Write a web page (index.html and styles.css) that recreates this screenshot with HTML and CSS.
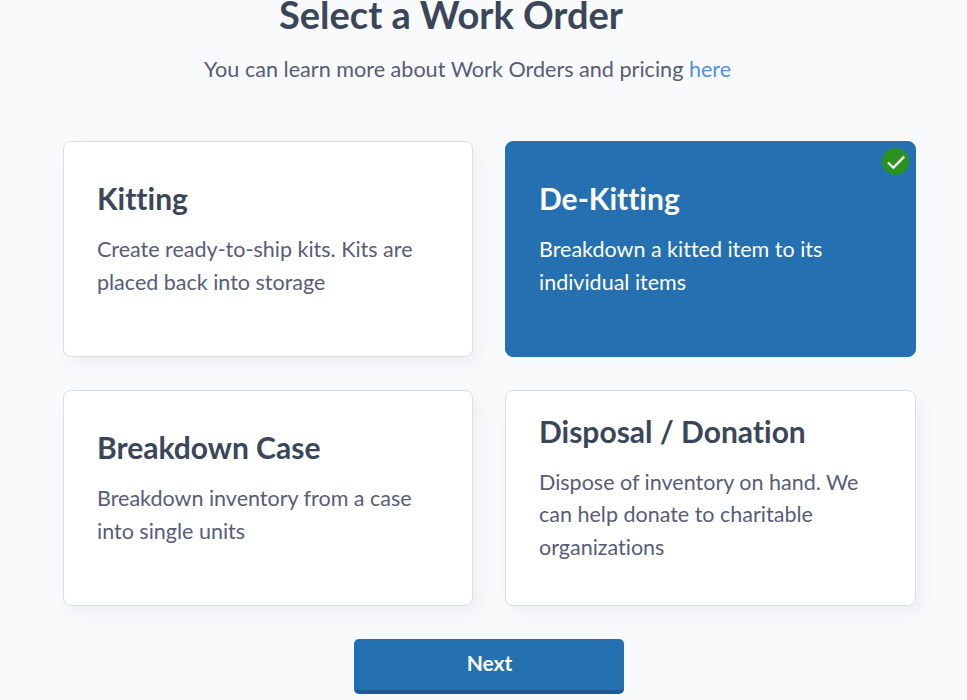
FILE: index.html
```html
<!DOCTYPE html>
<html lang="en">
<head>
    <meta charset="UTF-8">
    <title>Select a Work Order</title>
    <link rel="stylesheet" href="styles.css">
</head>
<body>
    <div class="page">
        <h1 class="title">Select a Work Order</h1>
        <p class="subtitle">You can learn more about Work Orders and pricing <a href="#">here</a></p>

        <div class="cards">
            <div class="card">
                <h2>Kitting</h2>
                <p>Create ready-to-ship kits. Kits are placed back into storage</p>
            </div>
            <div class="card selected">
                <span class="check">
                    <svg width="20" height="20" viewBox="0 0 20 20"><path d="M2 10.5l5.3 5.2L18.2 4.6" fill="none" stroke="#fff" stroke-width="2.3"/></svg>
                </span>
                <h2>De-Kitting</h2>
                <p>Breakdown a kitted item to its individual items</p>
            </div>
            <div class="card">
                <h2>Breakdown Case</h2>
                <p>Breakdown inventory from a case into single units</p>
            </div>
            <div class="card">
                <h2>Disposal / Donation</h2>
                <p>Dispose of inventory on hand. We can help donate to charitable organizations</p>
            </div>
        </div>

        <div class="actions">
            <button class="next-btn">Next</button>
        </div>
    </div>
</body>
</html>
```

FILE: styles.css
```css
html, body { height: 100%; }

body {
    margin: 0;
    background: #f9fafc;
    font-family: Lato, "Open Sans", sans-serif;
    font-variant-ligatures: none;
    color: #3a4659;
    overflow: hidden;
}

.page { padding: 0 51px 0 63px; }

.title {
    margin: 0;
    padding-left: 216px;
    font-size: 38px;
    line-height: 28px;
    font-weight: 700;
    color: #3a4659;
}

.subtitle {
    margin: 25px 0 0;
    padding-left: 141px;
    font-size: 21.6px;
    line-height: 32px;
    color: #575c78;
}

.subtitle a { color: #5291e6; text-decoration: none; }

.cards {
    display: grid;
    grid-template-columns: 410px 411px;
    grid-template-rows: 216px 216px;
    column-gap: 32px;
    row-gap: 33px;
    margin-top: 56px;
}

.card {
    position: relative;
    display: flex;
    flex-direction: column;
    justify-content: center;
    box-sizing: border-box;
    padding: 0 33px 20px;
    background: #fff;
    border: 1px solid #dcdee2;
    border-radius: 8px;
    box-shadow: 6px 8px 16px rgba(60, 70, 90, 0.06);
}

.card h2 {
    margin: 0 0 17px;
    font-size: 30px;
    line-height: 36px;
    font-weight: 700;
    color: #3a4659;
}

.card p {
    margin: 0;
    font-size: 21.5px;
    line-height: 32.5px;
    color: #575c78;
}

.card.selected {
    background: #2570b0;
    border-color: #2570b0;
    box-shadow: none;
}

.card.selected h2, .card.selected p { color: #fff; }

.check {
    position: absolute;
    top: 6px;
    right: 6px;
    display: flex;
    align-items: center;
    justify-content: center;
    width: 27px;
    height: 27px;
    border-radius: 50%;
    background: #2a931f;
}

.actions { display: flex; justify-content: center; margin-top: 33px; padding-right: 2px; }

.next-btn {
    box-sizing: border-box;
    width: 270px;
    height: 55px;
    padding: 0 0 5px 2px;
    background: linear-gradient(90deg, #1f6fb5, #2570b0 14px);
    border: none;
    border-bottom: 4px solid #1d5a99;
    border-radius: 5px;
    color: #fff;
    font-family: inherit;
    font-size: 21px;
    font-weight: 700;
}
```
